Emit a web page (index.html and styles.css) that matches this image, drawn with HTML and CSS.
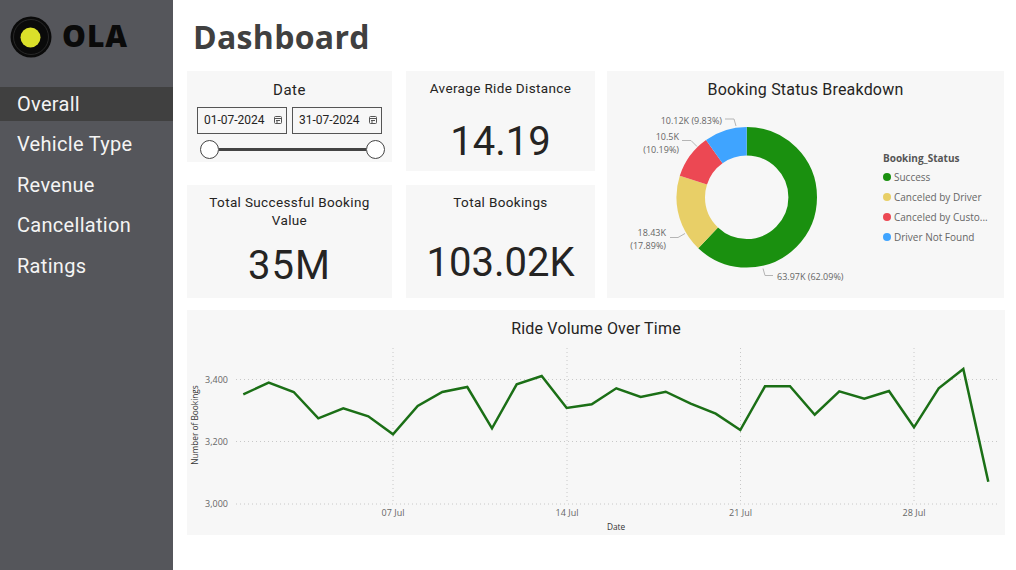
FILE: index.html
```html
<!DOCTYPE html>
<html lang="en">
<head>
  <meta charset="UTF-8">
  <title>Ola Dashboard</title>
  <link rel="stylesheet" href="styles.css">
</head>
<body>
  <div class="sidebar">
    <div class="logo">
      <svg width="44" height="44" viewBox="0 0 44 44">
        <circle cx="22" cy="22" r="20.5" fill="#0a0a0a"/>
        <circle cx="22" cy="22" r="17.500" fill="none" stroke="#333" stroke-width=".7"/>
        <circle cx="21.5" cy="22.500" r="10" fill="#dbe02a"/>
      </svg>
      <span class="logo_text">OLA</span>
    </div>
    <div class="nav">
      <div class="nav_item active">Overall</div>
      <div class="nav_item">Vehicle Type</div>
      <div class="nav_item">Revenue</div>
      <div class="nav_item">Cancellation</div>
      <div class="nav_item">Ratings</div>
    </div>
  </div>

  <div class="main">
    <h1>Dashboard</h1>

    <div class="top_row">
      <div class="stack">
        <div class="card date_card">
          <div class="card_title">Date</div>
          <div class="date_inputs">
            <div class="date_box">01-07-2024
              <svg class="cal" width="8" height="8" viewBox="0 0 8 8"><rect x=".5" y=".5" width="7" height="7" rx="1" fill="none" stroke="#555"/><path d="M1 2.5h6M2 4.5h4M2 6h2" stroke="#555"/></svg>
            </div>
            <div class="date_box">31-07-2024
              <svg class="cal" width="8" height="8" viewBox="0 0 8 8"><rect x=".5" y=".5" width="7" height="7" rx="1" fill="none" stroke="#555"/><path d="M1 2.5h6M2 4.5h4M2 6h2" stroke="#555"/></svg>
            </div>
          </div>
          <div class="slider">
            <span class="thumb"></span>
            <span class="track"></span>
            <span class="thumb"></span>
          </div>
        </div>
        <div class="card value_card tall">
          <div class="card_title wrapped">Total Successful Booking Value</div>
          <div class="big_value wide">35M</div>
        </div>
      </div>

      <div class="stack">
        <div class="card value_card short">
          <div class="card_title">Average Ride Distance</div>
          <div class="big_value">14.19</div>
        </div>
        <div class="card value_card tall">
          <div class="card_title">Total Bookings</div>
          <div class="big_value single">103.02K</div>
        </div>
      </div>

      <div class="card status_card">
        <div class="card_title chart_title">Booking Status Breakdown</div>
        <div class="status_body">
          <!-- viewBox uses page coordinates -->
          <svg class="donut" width="270" height="197" viewBox="607 101 270 197">
            <g fill="none" stroke-width="28.6" transform="rotate(-90 746.7 198.3)">
              <circle cx="746.7" cy="198.3" r="56" pathLength="100" stroke="#1a900f" stroke-dasharray="62.09 100"/>
              <circle cx="746.7" cy="198.3" r="56" pathLength="100" stroke="#e8cf67" stroke-dasharray="17.89 100" stroke-dashoffset="-62.09"/>
              <circle cx="746.7" cy="198.3" r="56" pathLength="100" stroke="#ec4853" stroke-dasharray="10.19 100" stroke-dashoffset="-79.98"/>
              <circle cx="746.7" cy="198.3" r="56" pathLength="100" stroke="#3fa4ff" stroke-dasharray="9.83 100" stroke-dashoffset="-90.17"/>
            </g>
            <g fill="none" stroke="#b5b5b5">
              <path d="M725 120h9l2 7"/>
              <path d="M682 141.5h9l6 6"/>
              <path d="M670 238.5h8l7-4"/>
              <path d="M773 276.5h-8l-2-7"/>
            </g>
            <g class="label">
              <text x="722" y="124.500" text-anchor="end">10.12K (9.83%)</text>
              <text x="679" y="141" text-anchor="end">10.5K</text>
              <text x="679" y="154" text-anchor="end">(10.19%)</text>
              <text x="666" y="237" text-anchor="end">18.43K</text>
              <text x="666" y="250" text-anchor="end">(17.89%)</text>
              <text x="777" y="281">63.97K (62.09%)</text>
            </g>
          </svg>
          <div class="legend">
            <div class="legend_title">Booking_Status</div>
            <div class="legend_item"><span class="dot green"></span>Success</div>
            <div class="legend_item"><span class="dot yellow"></span>Canceled by Driver</div>
            <div class="legend_item"><span class="dot red"></span>Canceled by Custo...</div>
            <div class="legend_item"><span class="dot blue"></span>Driver Not Found</div>
          </div>
        </div>
      </div>
    </div>

    <div class="card line_card">
      <div class="card_title chart_title">Ride Volume Over Time</div>
      <svg class="line_chart" width="818" height="195" viewBox="187 340 818 195">
        <g class="grid">
          <path d="M236 379.5H997M236 441.5H997M236 504H997"/>
          <path d="M393 348V504M567 348V504M740.500 348V504M914 348V504"/>
        </g>
        <g class="label">
          <text x="228" y="383" text-anchor="end">3,400</text>
          <text x="228" y="445" text-anchor="end">3,200</text>
          <text x="228" y="507" text-anchor="end">3,000</text>
          <text x="393" y="516" text-anchor="middle">07 Jul</text>
          <text x="567" y="516" text-anchor="middle">14 Jul</text>
          <text x="740.500" y="516" text-anchor="middle">21 Jul</text>
          <text x="914" y="516" text-anchor="middle">28 Jul</text>
        </g>
        <text class="axis_name" x="616" y="530" text-anchor="middle">Date</text>
        <text class="axis_name" transform="translate(198 425) rotate(-90)" text-anchor="middle">Number of Bookings</text>
        <polyline class="series" points="243.300,394.300 268.700,382.700 293.700,392 318.300,418.300 343.300,408.300 368.300,416.300 393,434.300 417.700,406 442.300,392 467.300,387 492,428.300 516.700,384.300 541.700,376 566.700,408 591.700,404.300 616.300,388.300 640.700,397 665.700,391.700 690.700,403.700 715.700,413.700 740.300,430 765,386.300 790,386.300 814.700,414.700 839.300,391.300 864.300,398.700 889,391 914,427.300 938.700,388.300 963.300,369 988.300,481.700"/>
      </svg>
    </div>
  </div>
</body>
</html>
```

FILE: styles.css
```css
body {
  margin: 0;
  height: 570px;
  display: flex;
  overflow: hidden;
  background-color: #fff;
  font-family: Roboto, sans-serif;
  color: #252423;
}

.sidebar {
  width: 173px;
  flex-shrink: 0;
  background-color: #55565b;
}

.logo {
  height: 87px;
  box-sizing: border-box;
  padding: 15px 0 0 9px;
  display: flex;
  align-items: flex-start;
  gap: 9px;
}

.logo_text {
  margin-top: 1px;
  font-family: "Open Sans", sans-serif;
  font-size: 30px;
  font-weight: 800;
  line-height: 40px;
  letter-spacing: 1px;
  color: #0a0a0a;
}

.nav {
  display: flex;
  flex-direction: column;
  gap: 6.4px;
}

.nav_item {
  height: 34px;
  line-height: 34px;
  padding-left: 17px;
  font-size: 20px;
  letter-spacing: .3px;
  color: #f4f4f4;
}

.nav_item.active {
  background-color: #404040;
}

.main {
  flex: 1;
  padding-left: 14px;
}

h1 {
  height: 71px;
  margin: 0;
  padding-left: 6px;
  box-sizing: border-box;
  font-family: "Open Sans", sans-serif;
  font-size: 32px;
  font-weight: 700;
  line-height: 73px;
  letter-spacing: .3px;
  color: #404040;
}

.top_row {
  display: flex;
  gap: 14px;
  height: 227px;
  margin-bottom: 12px;
}

.stack {
  display: flex;
  flex-direction: column;
  justify-content: space-between;
}

.stack:first-child {
  width: 205px;
}

.stack:nth-child(2) {
  width: 189px;
}

.card {
  background-color: #f7f7f7;
  text-align: center;
}

.card_title {
  font-size: 13.5px;
  line-height: 17.5px;
  letter-spacing: .35px;
}

.card_title.wrapped {
  padding: 0 20px;
}

.chart_title {
  font-size: 16px;
  line-height: 20px;
  letter-spacing: .2px;
}

.date_card {
  height: 91px;
  box-sizing: border-box;
  padding-top: 11px;
}

.date_card .card_title {
  font-size: 15px;
  letter-spacing: .5px;
}

.date_inputs {
  display: flex;
  justify-content: center;
  gap: 5px;
  margin-top: 7px;
}

.date_box {
  width: 90px;
  height: 27px;
  box-sizing: border-box;
  padding-left: 6px;
  display: flex;
  align-items: center;
  gap: 9px;
  border: 1px solid #555;
  font-size: 12px;
}

.slider {
  display: flex;
  align-items: center;
  margin: 6px 7px 0 13px;
}

.thumb {
  width: 17px;
  height: 17px;
  flex-shrink: 0;
  border: 1.5px solid #444;
  border-radius: 50%;
  background-color: #fff;
}

.track {
  flex: 1;
  height: 3px;
  background-color: #444;
}

.value_card {
  box-sizing: border-box;
  padding-top: 9px;
}

.value_card.short {
  height: 100px;
}

.value_card.tall {
  height: 113px;
}

.big_value {
  font-size: 40px;
  line-height: 50px;
  margin-top: 12px;
}

.big_value.wide {
  letter-spacing: 1px;
}

.short .big_value {
  margin-top: 19px;
}

.big_value.single {
  margin-top: 26px;
}

.status_card {
  width: 397px;
  margin-left: -2px;
  padding-top: 9px;
  box-sizing: border-box;
}

.status_body {
  display: flex;
  text-align: left;
}

.donut {
  display: block;
  flex-shrink: 0;
}

.label text {
  font-family: "Open Sans", sans-serif;
  font-size: 9px;
  fill: #666;
}

.legend {
  margin: 50px 0 0 6px;
  font-family: "Open Sans", sans-serif;
  font-size: 10px;
  color: #666;
}

.legend_title {
  font-weight: 700;
  color: #555;
  line-height: 17px;
}

.legend_item {
  display: flex;
  align-items: center;
  gap: 3px;
  height: 20px;
}

.dot {
  width: 8px;
  height: 8px;
  border-radius: 50%;
}

.green { background-color: #1a900f; }
.yellow { background-color: #e8cf67; }
.red { background-color: #ec4853; }
.blue { background-color: #3fa4ff; }

.line_card {
  width: 818px;
  height: 225px;
  padding-top: 9px;
  box-sizing: border-box;
}

.line_chart {
  display: block;
  margin-top: 1px;
}

.grid path {
  fill: none;
  stroke: #c8c8c8;
  stroke-dasharray: 1 3;
}

.axis_name {
  font-family: "Open Sans", sans-serif;
  font-size: 8.3px;
  fill: #333;
}

.series {
  fill: none;
  stroke: #1b6f16;
  stroke-width: 2.5;
}
```
